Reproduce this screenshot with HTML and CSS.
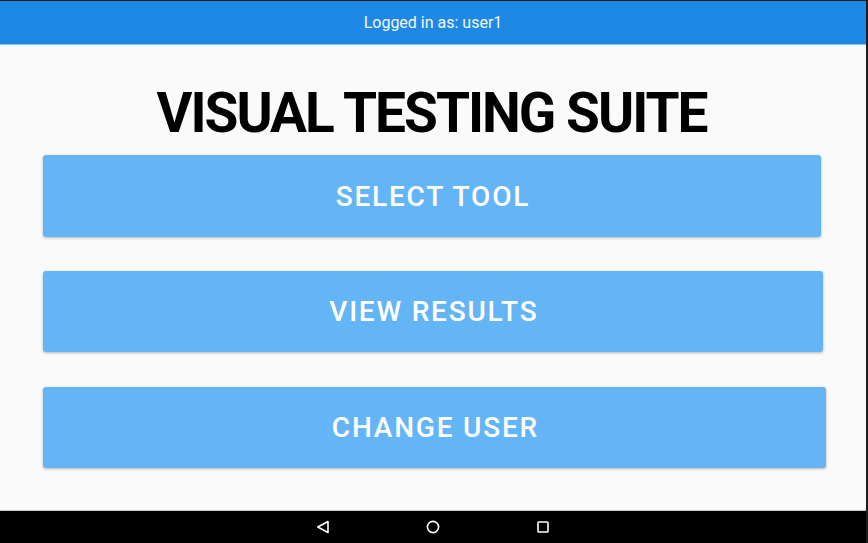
FILE: index.html
```html
<!DOCTYPE html>
<html>
<head>
<meta charset="utf-8">
<link rel="stylesheet" href="styles.css">
</head>
<body>
<div class="frame">
  <header class="topbar">Logged in as: user1</header>
  <main class="content">
    <h1 class="title">VISUAL TESTING SUITE</h1>
    <div class="buttons">
      <button class="btn btn-1">SELECT TOOL</button>
      <button class="btn btn-2">VIEW RESULTS</button>
      <button class="btn btn-3">CHANGE USER</button>
    </div>
  </main>
  <nav class="navbar">
    <svg class="nav-icon" width="14" height="14" viewBox="0 0 14 14"><path d="M12 1.5 L1.8 7 L12 12.5 Z" fill="none" stroke="#fff" stroke-width="1.6" stroke-linejoin="round"/></svg>
    <svg class="nav-icon" width="14" height="14" viewBox="0 0 14 14"><circle cx="7" cy="7" r="5.6" fill="none" stroke="#fff" stroke-width="1.6"/></svg>
    <svg class="nav-icon" width="14" height="14" viewBox="0 0 14 14"><rect x="2" y="2" width="10" height="10" rx="0.8" fill="none" stroke="#fff" stroke-width="1.6"/></svg>
  </nav>
</div>
</body>
</html>
```

FILE: styles.css
```css
* { box-sizing: border-box; }
html, body { margin: 0; padding: 0; }
body {
  width: 868px;
  height: 543px;
  overflow: hidden;
  font-family: Roboto, "Noto Sans", sans-serif;
  background: #fafafa;
}
.frame {
  width: 868px;
  height: 543px;
  border-top: 1px solid #1c1c1c;
  border-right: 2px solid #1c1c1c;
  display: flex;
  flex-direction: column;
  background: #fafafa;
}
.topbar {
  height: 44px;
  flex: none;
  background: #1e88e5;
  border-bottom: 1px solid #8cc2f0;
  color: #f4f8fc;
  font-size: 16px;
  display: flex;
  align-items: center;
  justify-content: center;
  padding-left: 0;
}
.content {
  flex: 1;
  display: flex;
  flex-direction: column;
  padding: 0 0 0 43px;
  border-bottom: 1px solid #c8c8c8;
}
.title {
  margin: 35px 0 0 0;
  padding-right: 46px;
  text-align: center;
  font-size: 55px;
  font-weight: 700;
  line-height: 66px;
  color: #000;
  letter-spacing: -2px;
}
.buttons {
  margin-top: 9px;
  display: flex;
  flex-direction: column;
  gap: 34px;
}
.btn {
  display: block;
  border: none;
  background: #64b5f6;
  color: #fff;
  font-family: Roboto, "Noto Sans", sans-serif;
  font-size: 28px;
  font-weight: 500;
  letter-spacing: 1.8px;
  text-indent: 1.8px;
  border-radius: 3px;
  box-shadow: 0 1px 3px rgba(0,0,0,0.28);
  padding: 0;
  height: 82px;
}
.btn-1 { width: 778px; }
.btn-2 { width: 780px; height: 81px; }
.btn-3 { width: 783px; height: 81px; margin-top: 1px; }
.navbar {
  height: 32px;
  flex: none;
  background: #000;
  display: flex;
  align-items: center;
  justify-content: center;
  gap: 96px;
  padding-top: 0;
}
.nav-icon { display: block; }
```
